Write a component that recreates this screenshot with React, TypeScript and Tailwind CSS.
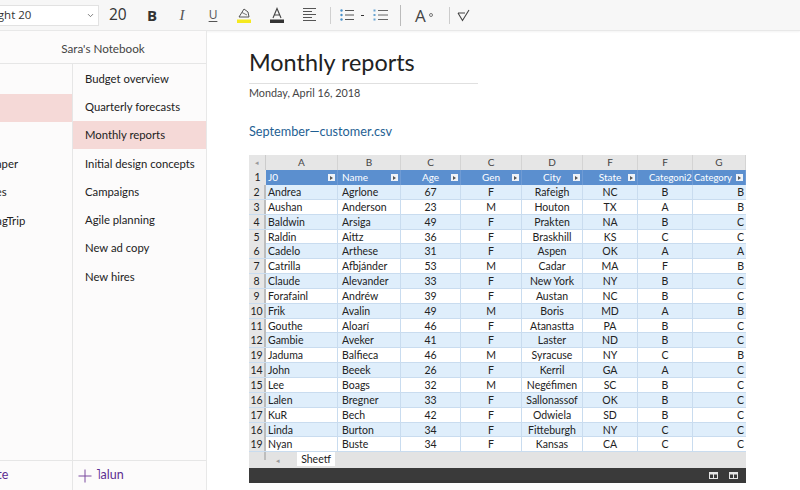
import { ChevronDown } from "lucide-react";

type Row = {
  n: number;
  first: string;
  last: string;
  age: number;
  gen: string;
  city: string;
  state: string;
  cat2: string;
  cat: string;
};

const ROWS: Row[] = [
  { n: 2, first: "Andrea", last: "Agrlone", age: 67, gen: "F", city: "Rafeigh", state: "NC", cat2: "B", cat: "B" },
  { n: 3, first: "Aushan", last: "Anderson", age: 23, gen: "M", city: "Houton", state: "TX", cat2: "A", cat: "B" },
  { n: 4, first: "Baldwin", last: "Arsiga", age: 49, gen: "F", city: "Prakten", state: "NA", cat2: "B", cat: "C" },
  { n: 5, first: "Raldin", last: "Aittz", age: 36, gen: "F", city: "Braskhill", state: "KS", cat2: "C", cat: "C" },
  { n: 6, first: "Cadelo", last: "Arthese", age: 31, gen: "F", city: "Aspen", state: "OK", cat2: "A", cat: "A" },
  { n: 7, first: "Catrilla", last: "Afbjánder", age: 53, gen: "M", city: "Cadar", state: "MA", cat2: "F", cat: "B" },
  { n: 8, first: "Claude", last: "Alevander", age: 33, gen: "F", city: "New York", state: "NY", cat2: "B", cat: "C" },
  { n: 9, first: "Forafainl", last: "Andréw", age: 39, gen: "F", city: "Austan", state: "NC", cat2: "B", cat: "C" },
  { n: 10, first: "Frik", last: "Avalin", age: 49, gen: "M", city: "Boris", state: "MD", cat2: "A", cat: "B" },
  { n: 11, first: "Gouthe", last: "Aloarí", age: 46, gen: "F", city: "Atanastta", state: "PA", cat2: "B", cat: "C" },
  { n: 12, first: "Gambie", last: "Aveker", age: 41, gen: "F", city: "Laster", state: "ND", cat2: "B", cat: "C" },
  { n: 19, first: "Jaduma", last: "Balfieca", age: 46, gen: "M", city: "Syracuse", state: "NY", cat2: "C", cat: "B" },
  { n: 14, first: "John", last: "Beeek", age: 26, gen: "F", city: "Kerril", state: "GA", cat2: "A", cat: "C" },
  { n: 15, first: "Lee", last: "Boags", age: 32, gen: "M", city: "Negéfimen", state: "SC", cat2: "B", cat: "C" },
  { n: 16, first: "Lalen", last: "Bregner", age: 33, gen: "F", city: "Sallonassof", state: "OK", cat2: "B", cat: "C" },
  { n: 17, first: "KuR", last: "Bech", age: 42, gen: "F", city: "Odwiela", state: "SD", cat2: "B", cat: "C" },
  { n: 16, first: "Linda", last: "Burton", age: 34, gen: "F", city: "Fitteburgh", state: "NY", cat2: "C", cat: "C" },
  { n: 19, first: "Nyan", last: "Buste", age: 34, gen: "F", city: "Kansas", state: "CA", cat2: "C", cat: "C" },
];

const PAGES = [
  "Budget overview",
  "Quarterly forecasts",
  "Monthly reports",
  "Initial design concepts",
  "Campaigns",
  "Agile planning",
  "New ad copy",
  "New hires",
];

const COLS = "grid grid-cols-[17px_72px_63px_60px_61px_61px_55px_55px_53px]";

function HeadCell({ label, textClass, filter = true }: { label: string; textClass: string; filter?: boolean }) {
  return (
    <div className="relative whitespace-nowrap border-r border-[#6f9bd4]">
      <div className={textClass}>{label}</div>
      {filter && (
        <span className="absolute right-[2px] top-[4px] flex h-[7px] w-[7px] items-center justify-center bg-[#eef2f7]">
          <span className="border-y-[2px] border-l-[3px] border-y-transparent border-l-[#555]" />
        </span>
      )}
    </div>
  );
}

function Toolbar() {
  return (
    <div className="flex h-[31px] shrink-0 items-center border-b border-[#e8e8e8] bg-[#f7f7f7] text-[#333] shadow-[0_1px_2px_rgba(0,0,0,0.05)]">
      <div className="flex h-[21px] w-[99px] items-center justify-between overflow-hidden border border-l-0 border-[#e2e2e2] bg-white pr-[3px]">
        <span className="-ml-[61px] whitespace-nowrap text-[11.5px]">Segoe UI Light 20</span>
        <ChevronDown size={9} strokeWidth={2} className="text-[#555]" />
      </div>
      <span className="ml-[10px] w-[17px] text-[15.5px] leading-none">20</span>
      <span className="ml-[20px] w-[12px] text-center text-[15px] font-bold leading-none">B</span>
      <span className="ml-[18px] w-[12px] text-center font-['Liberation_Serif',serif] text-[15px] italic leading-none text-[#555]">I</span>
      <span className="ml-[19px] w-[12px] text-center text-[12px] leading-none text-[#555] underline underline-offset-2">U</span>
      <svg className="ml-[17px]" width="16" height="18" viewBox="0 0 16 18" fill="none">
        <path d="M3 11 L8 3 L12 6 L13 11 Z" stroke="#555" strokeWidth="1" />
        <path d="M6 6.5 L11 9" stroke="#555" strokeWidth="0.8" />
        <rect x="1" y="13.5" width="14" height="3.5" fill="#f5e91f" />
      </svg>
      <svg className="ml-[17px]" width="16" height="18" viewBox="0 0 16 18" fill="none">
        <path d="M4 12 L8 2.5 L12 12 M5.5 9 H10.5" stroke="#444" strokeWidth="1.1" />
        <rect x="1" y="13.5" width="14" height="3.5" fill="#333" />
      </svg>
      <svg className="ml-[17px]" width="15" height="16" viewBox="0 0 15 16" stroke="#555" strokeWidth="1">
        <path d="M1 1.5 H14 M1 4.5 H10 M1 7.5 H14 M1 10.5 H10 M1 13.5 H14" />
      </svg>
      <span className="ml-[13px] h-[17px] w-px bg-[#d0d0d0]" />
      <svg className="ml-[9px]" width="14" height="14" viewBox="0 0 14 14">
        <g fill="#4a90c8">
          <circle cx="1.5" cy="2.5" r="1.2" />
          <circle cx="1.5" cy="7" r="1.2" />
          <circle cx="1.5" cy="11.5" r="1.2" />
        </g>
        <path d="M5 2.5 H14 M5 7 H14 M5 11.5 H14" stroke="#555" strokeWidth="1" />
      </svg>
      <span className="ml-[7px] h-px w-[3px] bg-[#333]" />
      <svg className="ml-[9px]" width="15" height="14" viewBox="0 0 15 14">
        <g fill="#6aa5d2">
          <rect x="0.5" y="1.5" width="2" height="2" />
          <rect x="0.5" y="6" width="2" height="2" />
          <rect x="0.5" y="10.5" width="2" height="2" />
        </g>
        <path d="M5 2.5 H15 M5 7 H15 M5 11.5 H15" stroke="#666" strokeWidth="1" />
      </svg>
      <span className="ml-[12px] h-[21px] w-px bg-[#bbb]" />
      <span className="ml-[14px] text-[17px] leading-none text-[#444]">A</span>
      <span className="ml-[3px] h-[4px] w-[4px] rounded-full border border-[#777]" />
      <span className="ml-[16px] h-[17px] w-px bg-[#ccc]" />
      <svg className="ml-[7px]" width="13" height="13" viewBox="0 0 13 13" fill="none" stroke="#444" strokeWidth="1.1">
        <path d="M1 4 L5.5 11.5 L12 1 M1 4 H8" />
      </svg>
    </div>
  );
}

function Sidebar() {
  return (
    <div className="flex w-[207px] shrink-0 flex-col border-r border-[#e8e8e8] bg-[#fcfbfb] font-['Lato',sans-serif]">
      <div className="flex h-[33px] shrink-0 items-center justify-center border-b border-[#e6e6e6] pt-[3px] text-[11.7px] text-[#444]">
        Sara's Notebook
      </div>
      <div className="flex min-h-0 flex-1 overflow-hidden">
        <div className="flex w-[73px] shrink-0 flex-col overflow-hidden border-r border-[#e6e6e6] pt-[30px] text-[11.3px] text-[#222]">
          <div className="h-[28px] bg-[#f5d9d7]" />
          <div className="h-[28px]" />
          <div className="flex h-[28px] items-center whitespace-nowrap">
            <span className="-ml-[41px]">Whitepaper</span>
          </div>
          <div className="flex h-[29px] items-center whitespace-nowrap">
            <span className="-ml-[23px]">Notes</span>
          </div>
          <div className="flex h-[28px] items-center whitespace-nowrap">
            <span className="-ml-[14px]">MagTrip</span>
          </div>
        </div>
        <div className="flex min-w-0 flex-1 flex-col text-[11.3px] text-[#222]">
          {PAGES.map((p) => (
            <div
              key={p}
              className={`flex h-[28.3px] items-center whitespace-nowrap pl-[12px] pt-[2px] ${p === "Monthly reports" ? "bg-[#f5d9d7]" : ""}`}
            >
              {p}
            </div>
          ))}
        </div>
      </div>
      <div className="flex h-[30px] shrink-0 items-center border-t border-[#e6e6e6] text-[12.5px] text-[#5c2d91]">
        <div className="flex h-full w-[73px] items-center overflow-hidden border-r border-[#e6e6e6]">
          <span className="-ml-[19px] whitespace-nowrap">Note</span>
        </div>
        <svg className="ml-[5px]" width="14" height="14" viewBox="0 0 14 14" stroke="#7a4a9e" strokeWidth="1">
          <path d="M7 0.5 V13.5 M0.5 7 H13.5" />
        </svg>
        <span className="ml-[4px]">˥alun</span>
      </div>
    </div>
  );
}

function Sheet() {
  return (
    <div className="w-[497px] font-['Lato',sans-serif] text-[10.5px] text-[#222]">
      <div className={`${COLS} h-[15px] bg-[#e6e6e6] text-[10px] leading-[15px] text-[#444]`}>
        <div className="border-r border-[#ccc] text-center text-[7px] text-[#999]">◂</div>
        {["A", "B", "C", "C", "D", "F", "F", "G"].map((c, i) => (
          <div key={i} className="border-r border-[#d4d4d4] text-center">{c}</div>
        ))}
      </div>
      <div className={`${COLS} h-[15px] bg-[#5b8fcf] text-[10px] leading-[15px] text-white`}>
        <div className="bg-[#e6e6e6] text-center text-[10.5px] text-[#222]">1</div>
        <HeadCell label="J0" textClass="pl-[2px]" />
        <HeadCell label="Name" textClass="pl-[4px]" />
        <HeadCell label="Age" textClass="text-center" />
        <HeadCell label="Gen" textClass="text-center" />
        <HeadCell label="City" textClass="text-center" />
        <HeadCell label="State" textClass="text-center" />
        <HeadCell label="Categoni2" textClass="pl-[11px] text-[9.5px]" filter={false} />
        <HeadCell label="Category" textClass="pl-[1px] text-[9.5px]" />
      </div>
      {ROWS.map((r, i) => (
        <div
          key={i}
          className={`${COLS} h-[14.85px] border-b border-[#c9dcef] leading-[14px] ${i % 2 === 0 ? "bg-[#dfeefb]" : "bg-white"}`}
        >
          <div className="border-r-[2px] border-[#bdbdbd] bg-[#e6e6e6] text-center">{r.n}</div>
          <div className="border-r border-[#c9dcef] pl-[2px]">{r.first}</div>
          <div className="border-r border-[#c9dcef] pl-[4px]">{r.last}</div>
          <div className="border-r border-[#c9dcef] text-center">{r.age}</div>
          <div className="border-r border-[#c9dcef] text-center">{r.gen}</div>
          <div className="whitespace-nowrap border-r border-[#c9dcef] text-center">{r.city}</div>
          <div className="border-r border-[#c9dcef] text-center">{r.state}</div>
          <div className="border-r border-[#c9dcef] text-center">{r.cat2}</div>
          <div className="pr-[2px] text-right">{r.cat}</div>
        </div>
      ))}
      <div className="flex h-[16px] items-start bg-[#e3e3e3]">
        <span className="h-[8px] w-[17px] border-r-[2px] border-[#bdbdbd]" />
        <span className="ml-[10px] mt-[3px] text-[7px] text-[#999]">◂</span>
        <span className="ml-[17px] h-[14px] w-[38px] bg-white text-center leading-[14px]">Sheetf</span>
      </div>
      <div className="flex h-[15px] items-center justify-end gap-[11px] bg-[#3a3a3a] pr-[8px]">
        <SheetIcon />
        <SheetIcon />
      </div>
    </div>
  );
}

function SheetIcon() {
  return (
    <svg width="9" height="7" viewBox="0 0 9 7">
      <rect x="0" y="0" width="9" height="7" fill="#e6e6e6" />
      <rect x="1" y="2.5" width="3" height="3.5" fill="#3a3a3a" />
      <rect x="5" y="2.5" width="3" height="3.5" fill="#3a3a3a" />
    </svg>
  );
}

export default function App() {
  return (
    <div className="flex h-[490px] w-[800px] flex-col overflow-hidden bg-white font-['Open_Sans',sans-serif]">
      <Toolbar />
      <div className="flex min-h-0 flex-1">
        <Sidebar />
        <main className="min-w-0 flex-1 pl-[42px] pt-[12px] font-['Lato',sans-serif]">
          <h1 className="pb-[1px] text-[23.4px] leading-[39px] text-[#222]">Monthly reports</h1>
          <div className="h-px w-[229px] bg-[#e0e0e0]" />
          <p className="mt-[1px] text-[10.8px] leading-[16px] text-[#444]">Monday, April 16, 2018</p>
          <p className="mt-[21px] text-[12.7px] leading-[18px] text-[#1f5f93]">September—customer.csv</p>
          <div className="mt-[15px]">
            <Sheet />
          </div>
        </main>
      </div>
    </div>
  );
}
